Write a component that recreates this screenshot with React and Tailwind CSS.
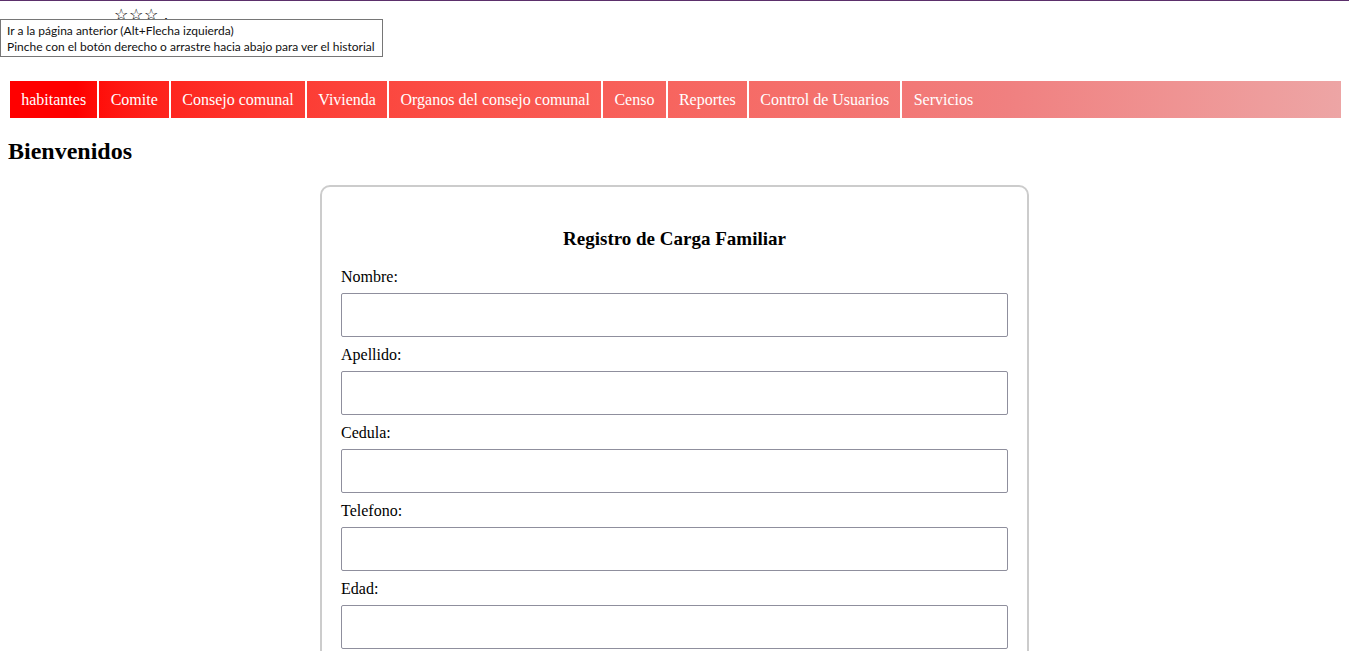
import React from 'react';

const menu = [
    'habitantes',
    'Comite',
    'Consejo comunal',
    'Vivienda',
    'Organos del consejo comunal',
    'Censo',
    'Reportes',
    'Control de Usuarios',
    'Servicios',
];

const fields = ['Nombre:', 'Apellido:', 'Cedula:', 'Telefono:', 'Edad:'];

const App = () => {
    return (
        <div className="min-h-[651px] bg-white text-black font-['Liberation_Serif',serif] relative">
            <div className="h-px bg-[#5b2f6b]" />

            {/* header stars */}
            <div className="h-[80px] pl-[114px] pt-[6px] text-[16px] leading-[16px] tracking-[1px] text-black">
                ☆☆☆ .
            </div>

            {/* browser tooltip */}
            <div className="absolute left-0 top-[19px] w-[383px] h-[38px] bg-white border border-[#767676] px-[6px] pt-[3px] font-['Lato',sans-serif] text-[12px] leading-[16px] text-[#111] whitespace-nowrap">
                <div>Ir a la página anterior (Alt+Flecha izquierda)</div>
                <div>Pinche con el botón derecho o arrastre hacia abajo para ver el historial</div>
            </div>

            <nav className="ml-[10px] mr-[8px] h-[37px] flex bg-gradient-to-r from-[#ff0000] from-5% via-[#f08080] via-75% to-[#eda5a5]">
                {menu.map((item, idx) => (
                    <a
                        key={idx}
                        className={`h-full flex items-center px-[11.25px] text-white text-[16px] whitespace-nowrap ${idx < menu.length - 1 ? 'border-r-2 border-white' : ''}`}
                    >
                        {item}
                    </a>
                ))}
            </nav>

            <h2 className="ml-[8px] mt-[19px] text-[24px] font-bold leading-[28px]">Bienvenidos</h2>

            <div className="mt-[20px] flex justify-center">
                <div className="w-[709px] border-2 border-[#cccccc] rounded-[10px] px-[19px] pt-[41px] pb-[20px]">
                    <h3 className="text-center text-[19px] font-bold leading-[22px]">Registro de Carga Familiar</h3>
                    <div className="mt-[9px]">
                        {fields.map((label, idx) => (
                            <div key={idx} className="pt-[9px]">
                                <label className="block text-[16px] leading-[18px]">{label}</label>
                                <input
                                    type="text"
                                    className="block mt-[7px] w-full h-[44px] border border-[#8f8f9d] rounded-[2px] bg-white"
                                />
                            </div>
                        ))}
                    </div>
                </div>
            </div>
        </div>
    );
};

export default App;
